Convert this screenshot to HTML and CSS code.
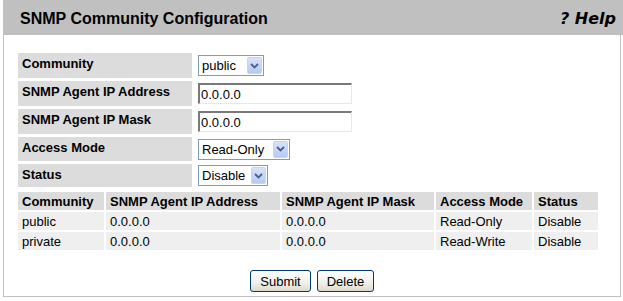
FILE: index.html
```html
<!DOCTYPE html>
<html lang="en">
<head>
    <meta charset="UTF-8">
    <title>SNMP Community Configuration</title>
    <link rel="stylesheet" href="styles.css">
</head>
<body>
    <div class="page">
        <div class="title-bar">
            <h1>SNMP Community Configuration</h1>
            <a class="help" href="#">? Help</a>
        </div>
        <div class="panel">
            <table class="form-table">
                <tr class="row-tall">
                    <td class="label">Community</td>
                    <td class="field">
                        <span class="select" style="width: 66px">
                            <select><option>public</option><option>private</option></select>
                            <span class="arrow"><svg width="9" height="6" viewBox="0 0 9 6"><path d="M1 1 L4.5 4.5 L8 1" fill="none" stroke="#4d6185" stroke-width="1.8"/></svg></span>
                        </span>
                    </td>
                </tr>
                <tr class="row-tall">
                    <td class="label">SNMP Agent IP Address</td>
                    <td class="field"><input type="text" class="text-input" value="0.0.0.0"></td>
                </tr>
                <tr class="row-tall">
                    <td class="label">SNMP Agent IP Mask</td>
                    <td class="field"><input type="text" class="text-input" value="0.0.0.0"></td>
                </tr>
                <tr class="row-mid">
                    <td class="label">Access Mode</td>
                    <td class="field">
                        <span class="select" style="width: 92px">
                            <select><option>Read-Only</option><option>Read-Write</option></select>
                            <span class="arrow"><svg width="9" height="6" viewBox="0 0 9 6"><path d="M1 1 L4.5 4.5 L8 1" fill="none" stroke="#4d6185" stroke-width="1.8"/></svg></span>
                        </span>
                    </td>
                </tr>
                <tr class="row-short">
                    <td class="label">Status</td>
                    <td class="field">
                        <span class="select" style="width: 70px">
                            <select><option>Disable</option><option>Enable</option></select>
                            <span class="arrow"><svg width="9" height="6" viewBox="0 0 9 6"><path d="M1 1 L4.5 4.5 L8 1" fill="none" stroke="#4d6185" stroke-width="1.8"/></svg></span>
                        </span>
                    </td>
                </tr>
            </table>

            <table class="list-table">
                <tr>
                    <th class="c1">Community</th>
                    <th class="c2">SNMP Agent IP Address</th>
                    <th class="c3">SNMP Agent IP Mask</th>
                    <th class="c4">Access Mode</th>
                    <th class="c5">Status</th>
                </tr>
                <tr>
                    <td>public</td>
                    <td>0.0.0.0</td>
                    <td>0.0.0.0</td>
                    <td>Read-Only</td>
                    <td>Disable</td>
                </tr>
                <tr>
                    <td>private</td>
                    <td>0.0.0.0</td>
                    <td>0.0.0.0</td>
                    <td>Read-Write</td>
                    <td>Disable</td>
                </tr>
            </table>

            <div class="buttons">
                <button class="btn btn-submit">Submit</button>
                <button class="btn btn-delete">Delete</button>
            </div>
        </div>
    </div>
</body>
</html>
```

FILE: styles.css
```css
body {
    margin: 0;
    padding: 0;
    background-color: #fff;
    font-family: 'Liberation Sans', Arial, sans-serif;
    font-size: 13px;
    color: #000;
}
.page {
    margin-left: 3px;
    width: 620px;
}
.title-bar {
    background-color: #c0c0c0;
    height: 35px;
    display: flex;
    justify-content: space-between;
    align-items: center;
    padding: 0 7px 0 17px;
}
.title-bar h1 {
    margin: 2px 0 0;
    font-size: 16px;
    font-weight: bold;
}
.help {
    color: #000;
    text-decoration: none;
    font-family: 'DejaVu Sans', Verdana, sans-serif;
    font-size: 16px;
    font-weight: bold;
    font-style: italic;
    margin-top: 2px;
}
.panel {
    width: 616px;
    border: 1px solid #c0c0c0;
    border-top: none;
    padding: 15px 0 4px 0;
}
.form-table {
    border-collapse: separate;
    border-spacing: 3px;
    margin-left: 11px;
}
.form-table td {
    padding: 0;
}
.row-tall td { height: 25px; }
.row-mid td { height: 24px; }
.row-short td { height: 23px; }
.form-table .label {
    width: 174px;
    background-color: #dcdcdc;
    font-weight: bold;
    padding-left: 4px;
    box-sizing: border-box;
    vertical-align: top;
    padding-top: 3px;
}
.form-table .field {
    padding-left: 3px;
    vertical-align: middle;
}
.select {
    display: inline-flex;
    align-items: center;
    height: 21px;
    box-sizing: border-box;
    border: 1px solid #7f9db9;
    background-color: #fff;
    vertical-align: middle;
    padding: 1px;
}
.select select {
    appearance: none;
    -webkit-appearance: none;
    border: none;
    background: transparent;
    font-family: 'Liberation Sans', Arial, sans-serif;
    font-size: 13px;
    color: #000;
    padding: 0 0 0 2px;
    margin: 0;
    flex: 1;
    min-width: 0;
    outline: none;
}
.arrow {
    width: 15px;
    height: 17px;
    box-sizing: border-box;
    border: 1px solid #c3d3fd;
    border-radius: 2px;
    background: linear-gradient(#d7e3fc, #b5c9f6);
    display: flex;
    align-items: center;
    justify-content: center;
}
.text-input {
    width: 154px;
    height: 21px;
    box-sizing: border-box;
    border-style: solid;
    border-width: 2px 1px 1px 2px;
    border-color: #7a7a7a #ece9d8 #ece9d8 #7a7a7a;
    padding: 0 0 0 1px;
    font-family: 'Liberation Sans', Arial, sans-serif;
    font-size: 13px;
    color: #000;
    vertical-align: middle;
    margin: 0;
}
.list-table {
    border-collapse: separate;
    border-spacing: 2px;
    margin-left: 12px;
}
.list-table th,
.list-table td {
    height: 18px;
    padding: 0 0 0 4px;
    box-sizing: border-box;
    text-align: left;
    white-space: nowrap;
}
.list-table th {
    background-color: #dcdcdc;
    font-weight: bold;
}
.list-table td {
    background-color: #efefef;
}
.c1 { width: 86px; }
.c2 { width: 174px; }
.c3 { width: 152px; }
.c4 { width: 96px; }
.c5 { width: 64px; }
.buttons {
    display: flex;
    justify-content: center;
    gap: 6px;
    margin-top: 18px;
}
.btn {
    height: 22px;
    box-sizing: border-box;
    border: 1px solid #003c74;
    border-radius: 3px;
    background: linear-gradient(#ffffff, #f0f0ea 60%, #dcd8cb);
    font-family: 'Liberation Sans', Arial, sans-serif;
    font-size: 13px;
    color: #000;
    padding: 0;
}
.btn-submit { width: 61px; }
.btn-delete { width: 57px; }
```
